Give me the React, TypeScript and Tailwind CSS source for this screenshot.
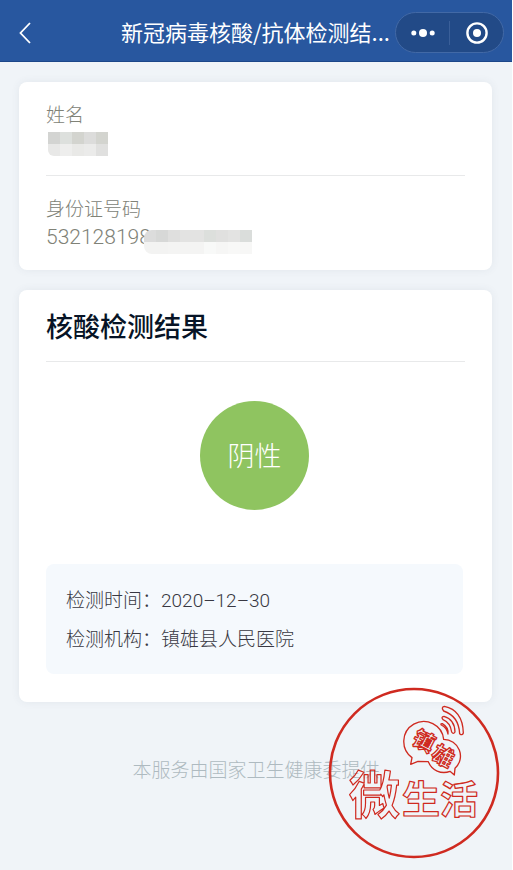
const nameTop = ['bg-[#d3d4d2]', 'bg-[#dde0dd]', 'bg-[#d3d4cf]', 'bg-[#dcdcdb]', 'bg-[#d3d4cf]'];
const nameBottom = ['bg-[#e8e8e7]', 'bg-[#eeeeed]', 'bg-[#e9e9e7]', 'bg-[#ebebea]', 'bg-[#e0e0df]'];
const idTop = [
  'bg-[#dcdcdc]',
  'bg-[#d7d8d7]',
  'bg-[#dfdfde]',
  'bg-[#e3e3e2]',
  'bg-[#e3e3e2]',
  'bg-[#dcdfdc]',
  'bg-[#e0e0df]',
  'bg-[#e3e3e2]',
  'bg-[#dadddb]',
];
const idBottom = [
  'bg-[#f3f3f2]',
  'bg-[#f3f3f2]',
  'bg-[#f4f4f3]',
  'bg-[#f4f4f3]',
  'bg-[#f4f4f3]',
  'bg-[#f8f9f8]',
  'bg-[#f6f6f5]',
  'bg-[#f8f8f7]',
  'bg-[#f7f7f6]',
];

function Mosaic({ rows, className }: { rows: string[][]; className: string }) {
  return (
    <div className={`overflow-hidden ${className}`} aria-hidden="true">
      {rows.map((row, r) => (
        <div key={r} className="flex">
          {row.map((color, c) => (
            <span key={c} className={`size-3 ${color}`} />
          ))}
        </div>
      ))}
    </div>
  );
}

function Stamp() {
  return (
    <svg
      viewBox="0 0 172 172"
      className="pointer-events-none absolute right-[12px] bottom-[11px] size-[172px] font-['Noto_Sans_CJK_SC',sans-serif]"
      fill="none"
      stroke="#cf2a20"
      strokeLinejoin="round"
    >
      <circle cx="86" cy="86" r="84" strokeWidth="2.6" />
      <g transform="translate(72 13) scale(0.3333)" strokeWidth="4">
        <path d="M32 193 L36 173 A60 60 0 1 1 131 118 A50 50 0 0 1 165 205 L163 225 L150 214 A50 50 0 0 1 85 185 Q68 184 54 184 Z" />
        <path d="M131 33 Q122 22 133 19 Q188 30 190 99 Q187 108 179 101 Q176 48 131 33 Z" />
        <path d="M129 59 Q122 50 132 49 Q164 58 165 96 Q160 104 155 96 Q151 68 129 59 Z" />
        <path d="M124 75 Q120 70 127 71 Q146 82 144 102 Q141 84 124 75 Z" />
      </g>
      <g strokeWidth="1.3" fontWeight="700" textAnchor="middle">
        <text fontSize="22" transform="translate(96 54) rotate(28)" y="8">
          镇
        </text>
        <text fontSize="22" transform="translate(115 69) rotate(28)" y="8">
          雄
        </text>
      </g>
      <g strokeWidth="1.2" fontWeight="700">
        <text x="21" y="127" fontSize="51">
          微
        </text>
        <text x="74" y="126" fontSize="38">
          生活
        </text>
      </g>
    </svg>
  );
}

export default function App() {
  return (
    <div className="relative min-h-screen border-r border-white bg-[#f0f4f8] font-['Roboto','Noto_Sans_CJK_SC',sans-serif]">
      <header className="flex h-[62px] items-center border-b border-[#1c4789] bg-[#28579f] pt-1 pr-2 pl-[19px] text-white">
        <button type="button" aria-label="返回" className="flex h-10 w-[102px] shrink-0 items-center">
          <svg width="12" height="22" viewBox="0 0 12 22" fill="none" stroke="currentColor" strokeWidth="1.8">
            <path d="M11 1 L1.5 11 L11 21" />
          </svg>
        </button>
        <h1 className="min-w-0 flex-1 pb-1 font-['Noto_Sans_CJK_SC',sans-serif] text-[22px] leading-8 whitespace-nowrap">
          新冠病毒核酸/抗体检测结...
        </h1>
        <div className="flex h-[41px] w-[109px] shrink-0 items-center rounded-full border border-[#4269a6] bg-[#224a87]">
          <button type="button" aria-label="更多" className="flex h-full flex-1 items-center justify-center">
            <svg width="24" height="8" viewBox="0 0 24 8" fill="currentColor">
              <circle cx="2.8" cy="4" r="2.5" />
              <circle cx="12" cy="4" r="4" />
              <circle cx="21.2" cy="4" r="2.5" />
            </svg>
          </button>
          <span className="h-6 w-px bg-[#3a5f99]" />
          <button type="button" aria-label="关闭" className="flex h-full flex-1 items-center justify-center">
            <svg width="22" height="22" viewBox="0 0 22 22" fill="none" stroke="currentColor" strokeWidth="2.4">
              <circle cx="11" cy="11" r="9.6" />
              <circle cx="11" cy="11" r="4" fill="currentColor" stroke="none" />
            </svg>
          </button>
        </div>
      </header>

      <main className="flex flex-col gap-5 pt-5 pr-5 pl-[19px]">
        <section className="rounded-lg bg-white px-[27px] pt-5 pb-[18px] text-[#808277] shadow-[0_0_8px_rgba(60,80,100,0.08)]">
          <div className="border-b border-[#e8e9ea] pb-[19px]">
            <h2 className="pt-[2px] text-[19px] leading-6 font-light">姓名</h2>
            <Mosaic rows={[nameTop, nameBottom]} className="mt-1 ml-[2px] w-[60px] rounded-bl-md" />
          </div>
          <div className="pt-[22px]">
            <h2 className="text-[19px] leading-6 font-light">身份证号码</h2>
            <div className="flex h-[30px] items-center">
              <span className="text-[21px] leading-[30px] font-light">532128198</span>
              <Mosaic rows={[idTop, idBottom]} className="mt-[10px] -ml-[7px] rounded-l-lg" />
            </div>
          </div>
        </section>

        <section className="rounded-lg bg-white px-[27px] pb-7 shadow-[0_0_8px_rgba(60,80,100,0.08)]">
          <h2 className="border-b border-[#e8e9ea] pt-[18px] pb-[13px] text-[27px] leading-10 font-medium text-[#071426]">
            核酸检测结果
          </h2>
          <div className="pr-[2px]">
            <div className="mx-auto mt-[39px] flex size-[109px] items-center justify-center rounded-full bg-[#8fc460] pt-[3px] text-[27px] font-light text-white">
              阴性
            </div>
            <dl className="mt-[54px] rounded-lg bg-[#f5f9fd] px-5 pt-[18px] pb-[14px] text-[19px] font-light text-[#383842]">
              <div className="flex h-[39px] items-center">
                <dt>检测时间：</dt>
                <dd>2020–12–30</dd>
              </div>
              <div className="flex h-[39px] items-center">
                <dt>检测机构：</dt>
                <dd>镇雄县人民医院</dd>
              </div>
            </dl>
          </div>
        </section>
      </main>

      <footer className="relative h-[168px] pt-[53px]">
        <p className="text-center text-[19px] leading-8 font-light text-[#aebac0]">本服务由国家卫生健康委提供</p>
        <Stamp />
      </footer>
    </div>
  );
}
